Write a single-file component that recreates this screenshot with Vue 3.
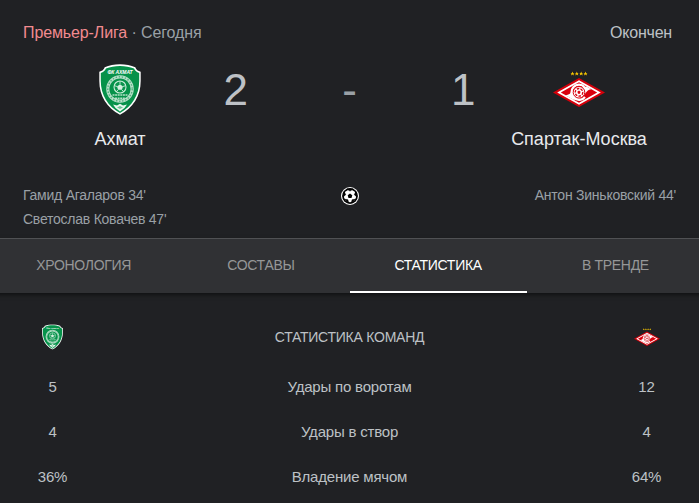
<template>
  <div class="match">
    <svg class="defs" width="0" height="0" aria-hidden="true">
      <symbol id="akhmat" viewBox="0 0 42 51">
        <path d="M21 .3C26.500 .3 32 1.300 36.300 3.200 37 5.600 39 7 41.700 7.700V17C41.700 32 34 44 21 50.700 8 44 .3 32 .3 17V7.700C3 7 5 5.600 5.700 3.200 10 1.300 15.500 .3 21 .3Z" fill="#fff" />
        <path d="M21 1.900C26 1.900 31 2.800 35 4.500 36 6.600 37.700 8 40.200 8.900V17C40.200 31 33 42.400 21 49 9 42.400 1.800 31 1.800 17V8.900C4.300 8 6 6.600 7 4.500 11 2.800 16 1.900 21 1.900Z" fill="#06924a" />
        <circle cx="21" cy="25" r="12.200" fill="none" stroke="#b5dfc8" stroke-width="3.200" />
        <circle cx="21" cy="25" r="12.200" fill="none" stroke="#4fb27e" stroke-width="1.400" stroke-dasharray="1.400 1.700" />
        <circle cx="21" cy="23" r="6" fill="#0a944d" stroke="#c9ebd8" stroke-width="1.100" />
        <path d="M21 20.200 24 22.400 22.900 25.800H19.100L18 22.400Z" fill="#d4efdf" />
        <path d="M21 17V20M27 21.500 24 22.500M25 28 23 26M17 28 19 26M15 21.500 18 22.500" stroke="#c9ebd8" stroke-width=".9" />
        <path d="M13.500 31H28.500M16 34.200H26" stroke="#b5dfc8" stroke-width="1.500" stroke-dasharray="2 .6" />
        <path d="M14 40.500 18 41.500 21 39.700 24 41.500 28 40.500 25.500 44 21 47.500 16.500 44Z" fill="#e8f7ee" />
        <path d="M18 43.500 21 42 24 43.500 21 45Z" fill="#6fc296" />
      </symbol>
      <symbol id="spartak" viewBox="0 0 52 36">
        <g fill="#f5c400">
          <path v-for="x in [19.5, 23.8, 28.2, 32.5]" :key="x" :transform="`translate(${x} 2.6)`" d="M0-2.100.6-.7 2.100-.6 1 0 1.400 1.800 0 .8-1.400 1.800-1 0-2.100-.6-.6-.7Z" />
        </g>
        <path d="M26 7 52 21.500 26 36 0 21.500Z" fill="#d5000b" />
        <path d="M26 9.300 47.800 21.500 26 33.700 4.200 21.500Z" fill="#fff" />
        <path d="M26 11.300 44.200 21.500 26 31.700 7.800 21.500Z" fill="#d9000d" />
        <path d="M12.500 24.200C16 24 18 22 20 19L29 16.500 33.500 15.500 38.500 18.200C34 18.500 33 22 30 25.500 27 29 22 29.500 19.500 28.200Z" fill="#fff" />
        <path d="M31.500 16A7.600 7.600 0 1 0 32 26" fill="none" stroke="#fff" stroke-width="2.200" />
        <circle cx="26" cy="21.300" r="5.800" fill="#fff" stroke="#d9000d" stroke-width="1" />
        <circle cx="26" cy="21.300" r="3.800" fill="none" stroke="#d9000d" stroke-width="1.300" stroke-dasharray="2.600 1.200" />
        <path d="M26 19.600 27.600 20.800 27 22.700H25L24.400 20.800Z" fill="#d9000d" />
      </symbol>
    </svg>

    <header class="top">
      <div><span class="league">Премьер-Лига</span> · Сегодня</div>
      <div class="status">Окончен</div>
    </header>

    <section class="score">
      <div class="team">
        <svg class="shield" viewBox="0 0 42 51">
          <use href="#akhmat" />
          <text class="crest-text" x="21" y="9.600" textLength="25">ФК АХМАТ</text>
        </svg>
        <span class="name">Ахмат</span>
      </div>
      <div class="result">
        <span>2</span>
        <span class="dash">-</span>
        <span>1</span>
      </div>
      <div class="team">
        <svg class="diamond"><use href="#spartak" /></svg>
        <span class="name">Спартак-Москва</span>
      </div>
    </section>

    <section class="goals">
      <div class="scorers">
        <div>Гамид Агаларов 34'</div>
        <div>Светослав Ковачев 47'</div>
      </div>
      <svg class="ball" viewBox="0 0 18 18">
        <circle cx="9" cy="9" r="9" fill="#fff" />
        <circle cx="9" cy="9" r="7.900" fill="#000" />
        <circle cx="9" cy="9" r="6.200" fill="#fff" />
        <path d="M9 6.600 11.300 8.300 10.500 11H7.500L6.700 8.300Z" fill="#000" />
        <path d="M6 2 9 4.100 12 2ZM15 4.500 13.300 7.700 16 10ZM14.400 12.300 11.200 12.700 10.300 16ZM3.600 12.300 6.800 12.700 7.700 16ZM3 4.500 4.700 7.700 2 10Z" fill="#000" stroke="#000" stroke-width=".6" />
      </svg>
      <div class="scorers right">
        <div>Антон Зиньковский 44'</div>
      </div>
    </section>

    <nav class="tabs">
      <button
        v-for="tab in tabs"
        :key="tab"
        class="tab"
        :class="{ active: tab === activeTab }"
        @click="activeTab = tab"
      >
        {{ tab }}
      </button>
    </nav>

    <section class="stats">
      <div class="row heading">
        <div class="value">
          <svg class="shield-small" viewBox="0 0 42 51">
            <use href="#akhmat" />
            <text class="crest-text" x="21" y="9.600" textLength="25">ФК АХМАТ</text>
          </svg>
        </div>
        <div class="label">СТАТИСТИКА КОМАНД</div>
        <div class="value"><svg class="diamond-small"><use href="#spartak" /></svg></div>
      </div>
      <div v-for="stat in stats" :key="stat.label" class="row">
        <div class="value">{{ stat.home }}</div>
        <div class="label">{{ stat.label }}</div>
        <div class="value">{{ stat.away }}</div>
      </div>
    </section>
  </div>
</template>

<script setup>
import { ref } from "vue"

const tabs = ["ХРОНОЛОГИЯ", "СОСТАВЫ", "СТАТИСТИКА", "В ТРЕНДЕ"]
const activeTab = ref("СТАТИСТИКА")

const stats = [
  { label: "Удары по воротам", home: "5", away: "12" },
  { label: "Удары в створ", home: "4", away: "4" },
  { label: "Владение мячом", home: "36%", away: "64%" }
]
</script>

<style>
body {
  margin: 0;
  background: #202124;
}
</style>

<style scoped>
.match {
  width: 699px;
  height: 503px;
  overflow: hidden;
  background: #202124;
  color: #bdc1c6;
  font-family: Arial, "Liberation Sans", sans-serif;
}

.defs {
  display: block;
}

.top {
  display: flex;
  justify-content: space-between;
  padding: 23px 27px 0 23px;
  font-size: 16px;
  line-height: 20px;
  letter-spacing: -0.12px;
  color: #9aa0a6;
}

.league {
  color: #f28b90;
}

.status {
  letter-spacing: -0.2px;
  color: #bdc1c6;
}

.score {
  display: flex;
  justify-content: space-between;
  height: 132px;
  padding: 0 20px;
}

.team {
  display: flex;
  flex-direction: column;
  align-items: center;
  width: 200px;
}

.shield {
  width: 42px;
  height: 51px;
  margin: 21px 0 13px;
}

.diamond {
  width: 52px;
  height: 36px;
  margin: 28px 0 21px;
}

.crest-text {
  font-size: 5px;
  font-weight: bold;
  font-style: italic;
  text-anchor: middle;
  fill: #fff;
}

.name {
  font-size: 18px;
  line-height: 22px;
  color: #e8eaed;
  white-space: nowrap;
}

.result {
  display: flex;
  justify-content: space-between;
  width: 252px;
  padding-top: 22px;
  font-size: 44px;
  line-height: 50px;
}

.dash {
  color: #9aa0a6;
}

.goals {
  display: flex;
  justify-content: space-between;
  height: 55px;
  padding: 8px 23px 0;
  font-size: 14px;
  line-height: 24px;
  letter-spacing: -0.24px;
  color: #9aa0a6;
}

.scorers {
  width: 270px;
}

.right {
  text-align: right;
}

.ball {
  width: 18px;
  height: 18px;
  margin-top: 4px;
}

.tabs {
  display: flex;
  height: 54px;
  margin: 0 -5px;
  border-top: 1px solid #505154;
  background: #303134;
  box-shadow: 0 2px 4px rgba(0, 0, 0, 0.5);
}

.tab {
  width: 177.5px;
  height: 54px;
  padding: 0;
  border: none;
  border-bottom: 2px solid transparent;
  background: none;
  color: #969798;
  font-family: inherit;
  font-size: 14px;
  letter-spacing: -0.3px;
  cursor: pointer;
}

.tab.active {
  color: #fff;
  border-bottom-color: #fff;
}

.stats {
  padding-top: 17px;
}

.row {
  display: flex;
  align-items: center;
  height: 45px;
  font-size: 15px;
  letter-spacing: -0.2px;
}

.heading {
  height: 54px;
  font-size: 14px;
  letter-spacing: -0.25px;
}

.value {
  display: flex;
  justify-content: center;
  width: 105px;
}

.label {
  flex: 1;
  text-align: center;
}

.shield-small {
  width: 21px;
  height: 26px;
}

.diamond-small {
  width: 26px;
  height: 18px;
}
</style>
